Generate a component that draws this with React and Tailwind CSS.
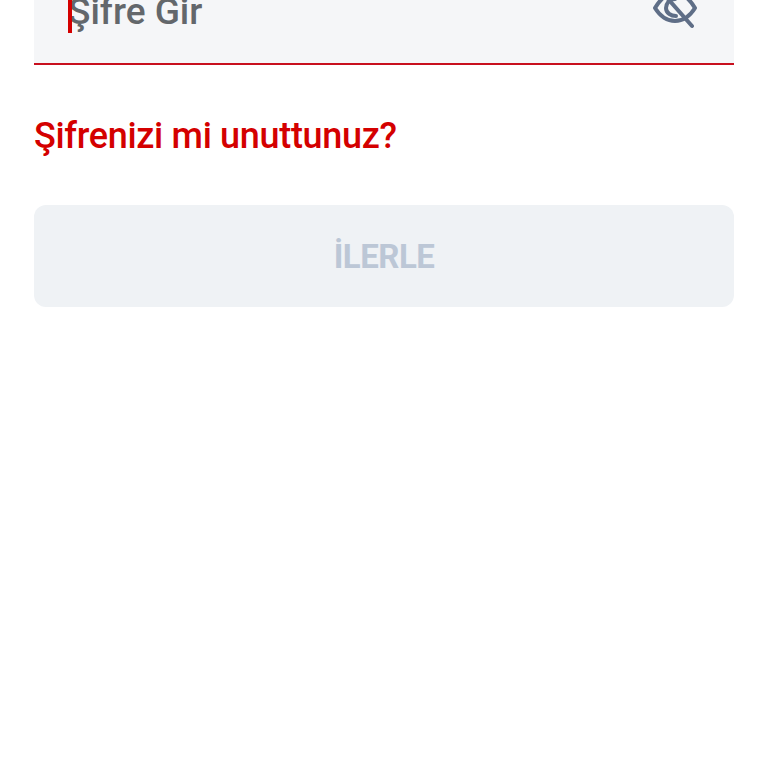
import { useState } from 'react'

function EyeOff() {
  return (
    <svg width="46" height="46" viewBox="0 0 46 46" fill="none" stroke="#5f6e87" strokeWidth="4" strokeLinecap="round" strokeLinejoin="round">
      <path d="M9 5 L40 40" />
      <path d="M3 22 C9 12 15 7 23 7 C31 7 37 12 43 22 C38 30 31 35 23 35 C15 35 8 30 3 22 Z" />
      <path d="M23 13 C17 13 14 18 14 22 C14 27 19 30 24 30" />
    </svg>
  )
}

export default function App() {
  const [value, setValue] = useState('')

  return (
    <div className="h-[768px] w-[768px] overflow-hidden bg-white px-[34px] font-['Roboto',sans-serif]">
      <div className="-mt-[37px] flex h-[102px] items-center justify-between border-b-2 border-[#c8101e] bg-[#f5f6f8] pl-[34px] pr-[36px]">
        <div className="relative flex items-center">
          <span className="absolute left-0 top-[3px] h-[38px] w-[4px] bg-[#d40000]" />
          <span className="-mt-[3px] text-[37px] font-medium leading-[46px] text-[#63676b]">{value || 'Şifre Gir'}</span>
        </div>
        <button onClick={() => setValue('')} className="-mt-[9px] flex items-center">
          <EyeOff />
        </button>
      </div>
      <a className="mt-[46px] block text-[36px] font-medium leading-[50px] tracking-[-0.32px] text-[#d40000]">Şifrenizi mi unuttunuz?</a>
      <button className="mt-[44px] flex h-[102px] w-full items-center justify-center rounded-xl bg-[#eff2f5] pt-[2px] text-[33px] font-bold tracking-[-0.5px] text-[#bcc7d6]">
        İLERLE
      </button>
    </div>
  )
}
